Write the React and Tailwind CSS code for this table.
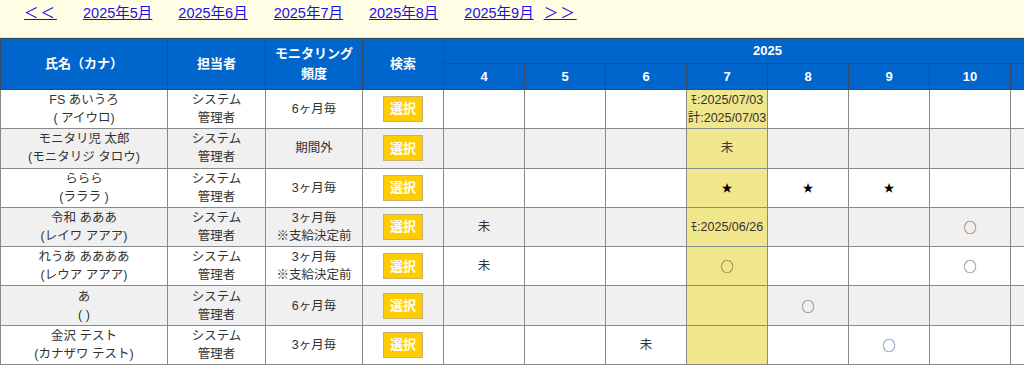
const months = ["2025年5月", "2025年6月", "2025年7月", "2025年8月", "2025年9月"];
const cols = [4, 5, 6, 7, 8, 9, 10, 11];

const rows = [
  { name: "FS あいうろ", kana: "( アイウロ)", freq: ["6ヶ月毎"], cells: { 7: ["ﾓ:2025/07/03", "計:2025/07/03"] } },
  { name: "モニタリ児 太郎", kana: "(モニタリジ タロウ)", freq: ["期間外"], cells: { 7: ["未"] } },
  { name: "ららら", kana: "(ラララ )", freq: ["3ヶ月毎"], cells: { 7: ["★"], 8: ["★"], 9: ["★"] } },
  { name: "令和 あああ", kana: "(レイワ アアア)", freq: ["3ヶ月毎", "※支給決定前"], cells: { 4: ["未"], 7: ["ﾓ:2025/06/26"], 10: ["○"] } },
  { name: "れうあ ああああ", kana: "(レウア アアア)", freq: ["3ヶ月毎", "※支給決定前"], cells: { 4: ["未"], 7: ["○"], 10: ["○"] } },
  { name: "あ", kana: "( )", freq: ["6ヶ月毎"], cells: { 8: ["○"] } },
  { name: "金沢 テスト", kana: "(カナザワ テスト)", freq: ["3ヶ月毎"], cells: { 6: ["未"], 9: ["○"] } },
];

function Mark({ t }) {
  if (t === "★") return <div className="text-black text-[11px]">★</div>;
  if (t === "○") return <div className="font-['Noto_Sans_CJK_JP',sans-serif] text-[13px] text-[#444]">○</div>;
  return <div>{t}</div>;
}

export default function App() {
  return (
    <div className="w-[1024px] h-[366px] overflow-hidden bg-white text-[#333] font-['Liberation_Sans','Noto_Sans_CJK_JP',sans-serif]">
      {/* month navigation */}
      <div className="h-[38px] bg-[#fffde3] border-b border-[#e8e4c0] flex items-start pt-[3px] text-[14.5px]">
        <a href="#" className="ml-[24px] text-[#1a0dee] underline tracking-[2px]">＜＜</a>
        {months.map((m) => (
          <a key={m} href="#" className="ml-[26px] text-[#1a0dee] underline">
            {m}
          </a>
        ))}
        <a href="#" className="ml-[10px] text-[#1a0dee] underline tracking-[2px]">＞＞</a>
      </div>

      <table className="table-fixed border-collapse w-[1091px] text-[12.5px]">
        <colgroup>
          <col className="w-[167px]" />
          <col className="w-[98px]" />
          <col className="w-[97px]" />
          <col className="w-[81px]" />
          {cols.map((c) => (
            <col key={c} className="w-[81px]" />
          ))}
        </colgroup>
        <thead className="bg-[#0066cc] text-white font-bold text-[13px]">
          <tr className="h-[25px]">
            <th rowSpan={2} className="border border-[#3a4a60]">氏名（カナ）</th>
            <th rowSpan={2} className="border border-[#3a4a60]">担当者</th>
            <th rowSpan={2} className="border border-[#3a4a60] leading-[20px]">モニタリング<br />頻度</th>
            <th rowSpan={2} className="border border-[#3a4a60]">検索</th>
            <th colSpan={8} className="border border-[#3a4a60] text-center">2025</th>
          </tr>
          <tr className="h-[26px]">
            {cols.map((c) => (
              <th key={c} className="border border-[#3a4a60]">{c}</th>
            ))}
          </tr>
        </thead>
        <tbody>
          {rows.map((r, i) => (
            <tr key={i} className={`h-[39.3px] ${i % 2 === 1 ? "bg-[#f0f0f0]" : "bg-white"}`}>
              <td className="border border-[#8a8a8a] text-center leading-[18px]">
                {r.name}
                <br />
                {r.kana}
              </td>
              <td className="border border-[#8a8a8a] text-center leading-[18px]">
                システム
                <br />
                管理者
              </td>
              <td className="border border-[#8a8a8a] text-center leading-[18px]">
                {r.freq.map((f, j) => (
                  <div key={j}>{f}</div>
                ))}
              </td>
              <td className="border border-[#8a8a8a] text-center">
                <button className="w-[40px] h-[26px] bg-[#ffcc00] border border-[#c8b070] text-white font-bold text-[13px] align-middle">
                  選択
                </button>
              </td>
              {cols.map((c) => (
                <td
                  key={c}
                  className={`border border-[#8a8a8a] text-center leading-[18px] ${c === 7 ? "bg-[#f0e68c]" : ""}`}
                >
                  {(r.cells[c] || []).map((t, j) => (
                    <Mark key={j} t={t} />
                  ))}
                </td>
              ))}
            </tr>
          ))}
        </tbody>
      </table>
    </div>
  );
}
